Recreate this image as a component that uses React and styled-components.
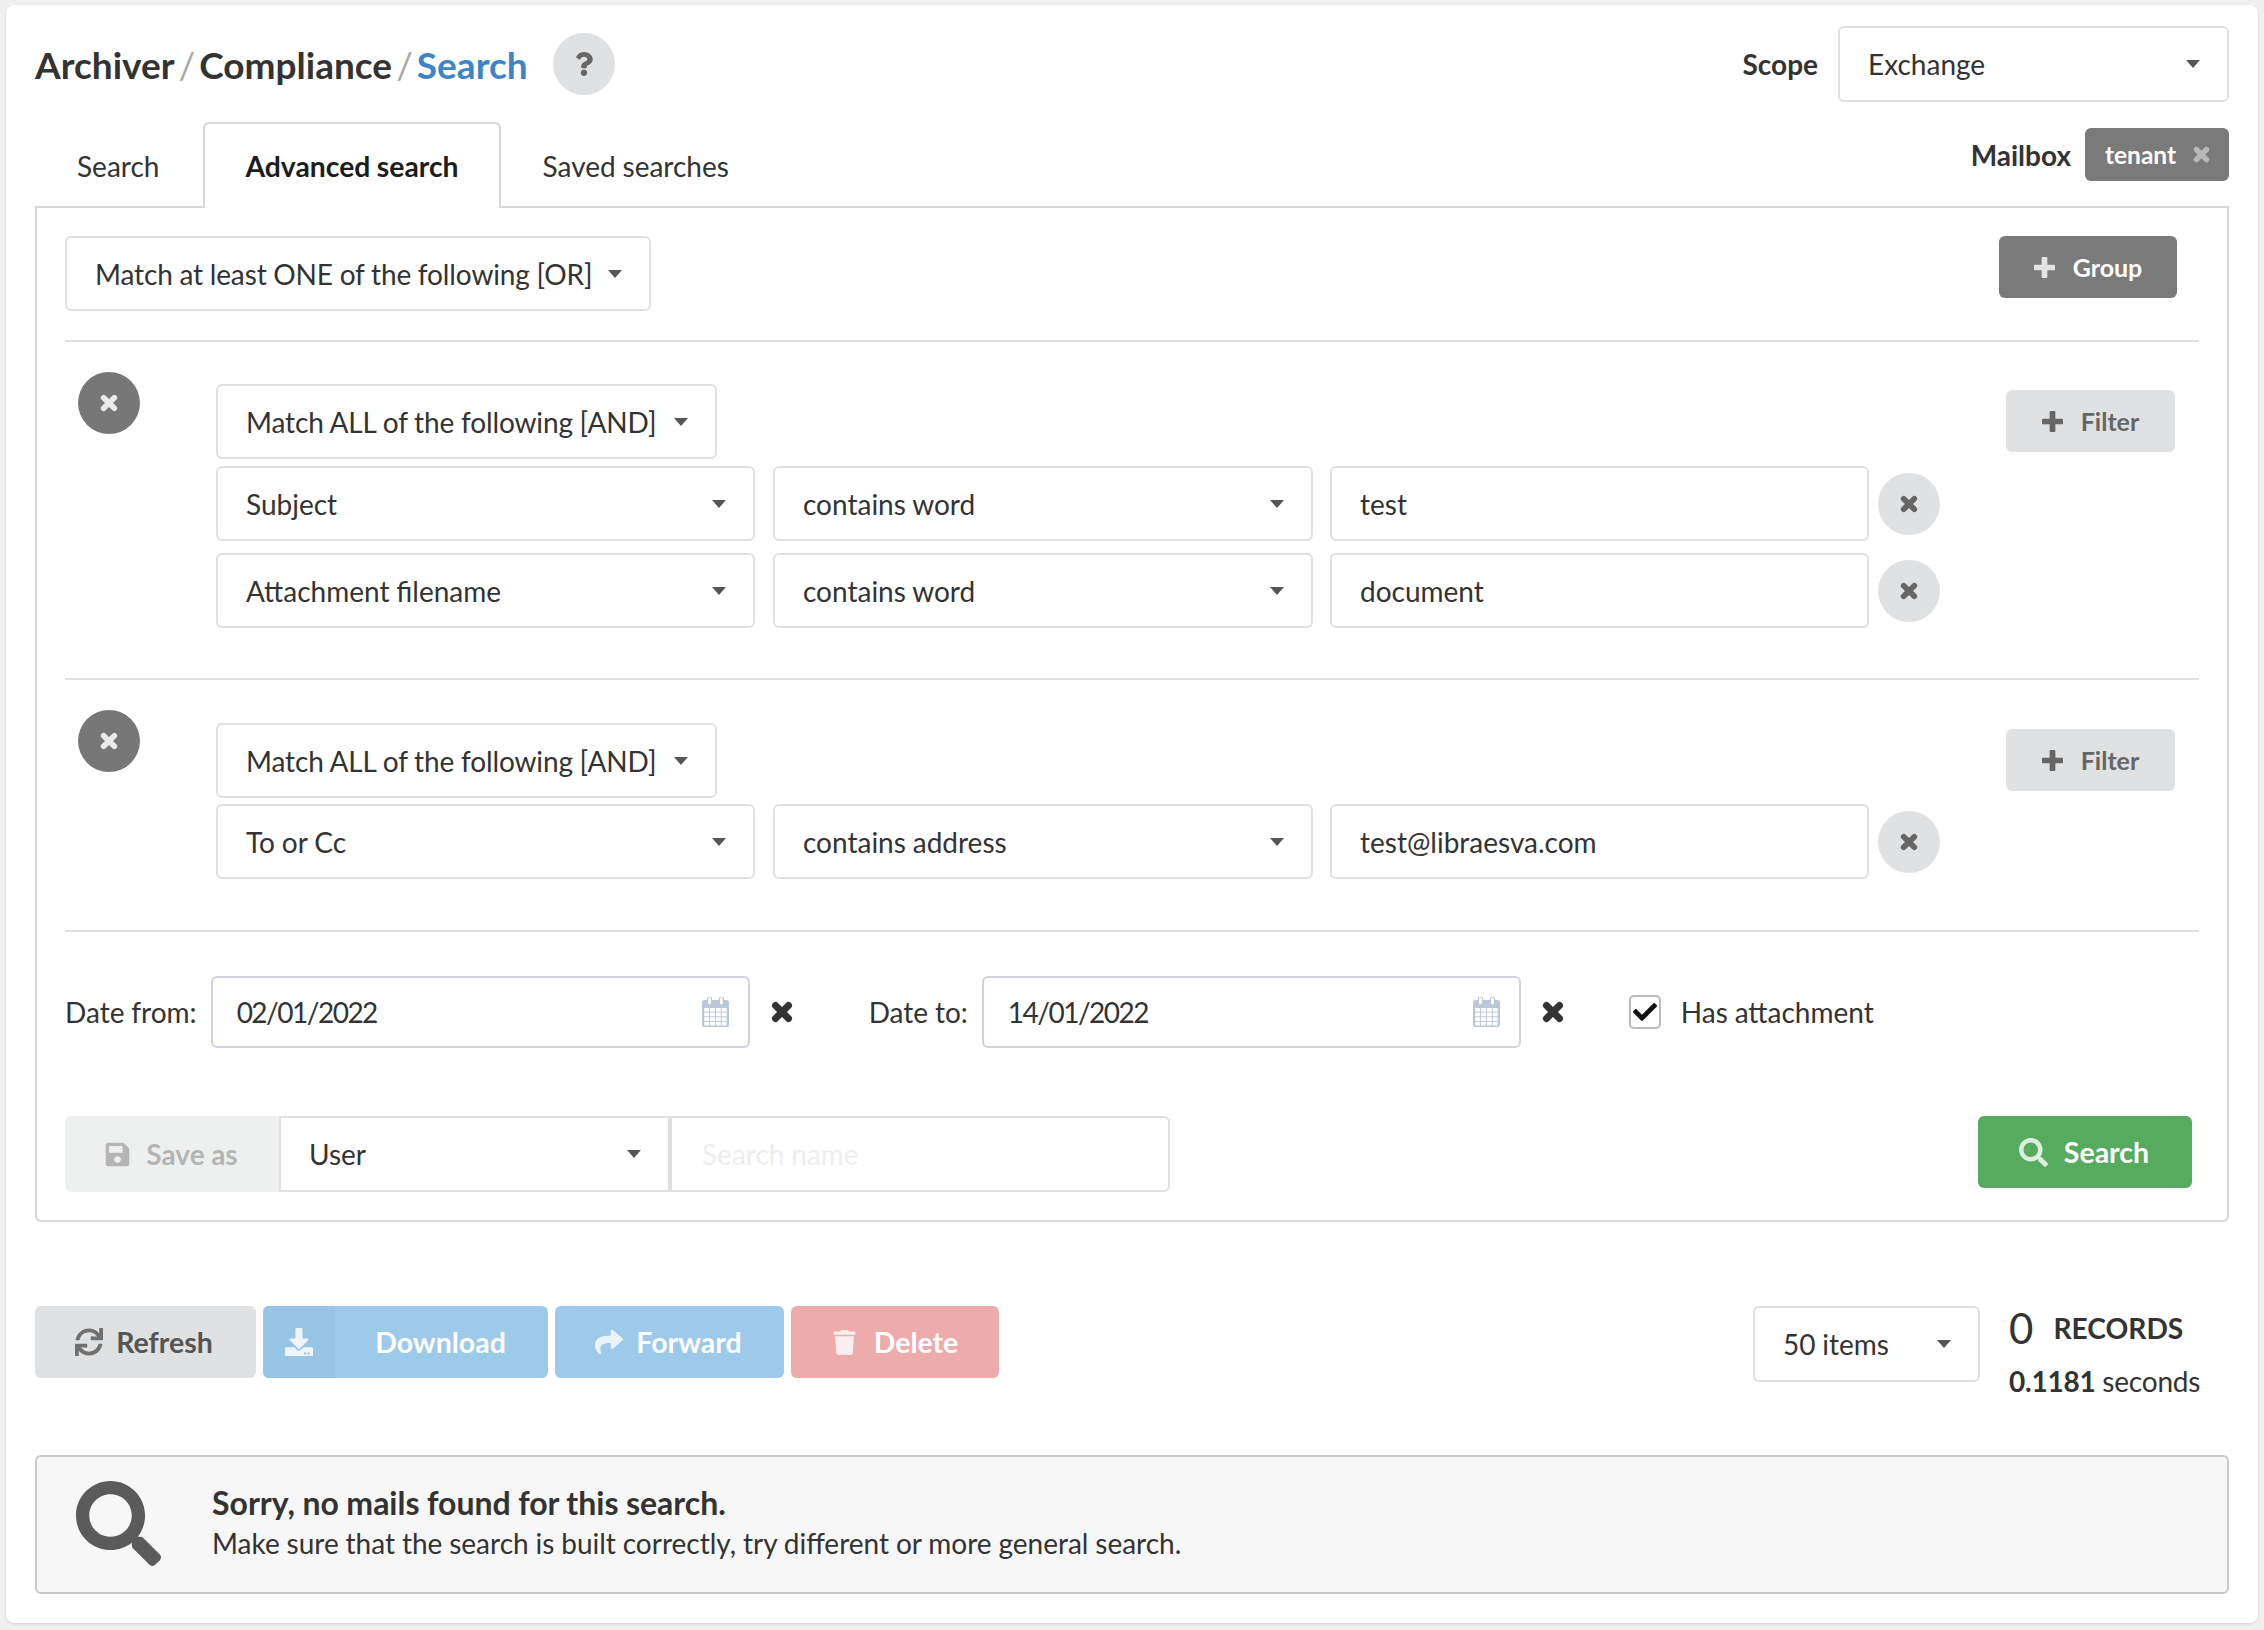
import React from "react";
import styled, { createGlobalStyle } from "styled-components";
import { FaQuestion, FaSave, FaDownload, FaSync, FaShare, FaTrash, FaSearch, FaCheck } from "react-icons/fa";

const GlobalStyle = createGlobalStyle`
  * { box-sizing: border-box; }
  html, body { margin: 0; padding: 0; background: #f0f0f0; }
  body {
    font-family: Lato, "Open Sans", sans-serif;
    font-size: 28px;
    color: #333;
    word-spacing: -0.3px;
  }
`;

const Card = styled.div`
  margin: 5px 6px 7px 6px;
  padding: 21px 29px 29px;
  background: #fff;
  border-radius: 8px;
  box-shadow: 0 1px 3px rgba(0, 0, 0, 0.12);
`;

const Header = styled.div`
  display: flex;
  justify-content: space-between;
  align-items: center;
  height: 76px;
  margin-bottom: 20px;
`;

const Breadcrumb = styled.div`
  display: flex;
  align-items: center;
  font-size: 37px;
  font-weight: 700;
  color: #333;
`;

const Slash = styled.span`
  font-weight: 400;
  color: #aaa;
  margin: 0 4px;
`;

const ActiveCrumb = styled.span`
  color: #3d85c6;
`;

const HelpCircle = styled.div`
  width: 62px;
  height: 62px;
  margin-left: 25px;
  border-radius: 50%;
  background: #e0e1e2;
  color: #666;
  font-size: 24px;
  display: flex;
  align-items: center;
  justify-content: center;
`;

const ScopeWrap = styled.div`
  display: flex;
  align-items: center;
  gap: 20px;
  font-weight: 700;
`;

const Select = styled.div`
  display: flex;
  align-items: center;
  justify-content: space-between;
  flex: none;
  width: ${(p) => p.$width}px;
  height: ${(p) => p.$height || 75}px;
  margin-left: ${(p) => p.$ml || 0}px;
  padding: 0 27px 0 28px;
  background: #fff;
  border: 2px solid #e0e0e0;
  border-radius: ${(p) => p.$radius ?? "6px"};
  font-weight: 400;
  color: #333;
`;

const MatchSelect = styled(Select)`
  letter-spacing: -0.12px;
`;

const Caret = styled.span`
  width: 0;
  height: 0;
  border-left: 7.5px solid transparent;
  border-right: 7.5px solid transparent;
  border-top: 8px solid #555;
`;

const TabBar = styled.div`
  display: flex;
  justify-content: space-between;
  align-items: flex-start;
  height: 84px;
  position: relative;
  z-index: 1;
`;

const Tabs = styled.div`
  display: flex;
  margin-right: auto;
`;

const Tab = styled.div`
  height: 86px;
  padding: 0 40px;
  margin-right: ${(p) => p.$mr || 0}px;
  display: flex;
  align-items: center;
  font-size: ${(p) => (p.$active ? 28.3 : 28)}px;
  font-weight: ${(p) => (p.$active ? 700 : 400)};
  color: ${(p) => (p.$active ? "#1d1d1d" : "#333")};
  background: ${(p) => (p.$active ? "#fff" : "transparent")};
  border: 2px solid ${(p) => (p.$active ? "#d8d8d8" : "transparent")};
  border-bottom: 0;
  border-radius: 6px 6px 0 0;
`;

const MailboxWrap = styled.div`
  display: flex;
  align-items: center;
  gap: 14px;
  margin-top: 6px;
  font-weight: 700;
`;

const Tag = styled.div`
  height: 53px;
  width: 144px;
  padding: 0 19px 0 20px;
  display: flex;
  align-items: center;
  justify-content: space-between;
  background: #7a7a7a;
  border-radius: 6px;
  color: #fff;
  font-size: 24.5px;
  svg { color: #b8b8b8; }
`;

const Panel = styled.div`
  padding: 28px 28px 28px 28px;
  border: 2px solid #d8d8d8;
  border-radius: 0 0 6px 6px;
`;

const TopRow = styled.div`
  display: flex;
  justify-content: space-between;
  align-items: flex-start;
  padding-bottom: 29px;
`;

const Btn = styled.div`
  display: flex;
  align-items: center;
  justify-content: center;
  flex: none;
  gap: ${(p) => p.$gap || 13}px;
  width: ${(p) => p.$width}px;
  height: ${(p) => p.$height}px;
  margin-right: ${(p) => p.$mr || 0}px;
  margin-top: ${(p) => p.$mt || 0}px;
  padding-right: ${(p) => p.$pr || 0}px;
  background: ${(p) => p.$bg};
  color: ${(p) => p.$color || "#fff"};
  border-radius: 6px;
  font-size: ${(p) => p.$size || 28.5}px;
  font-weight: 700;
  svg { opacity: ${(p) => p.$iconOpacity ?? 0.8}; }
`;

const FilterBtn = styled(Btn)`
  margin-left: auto;
`;

const Group = styled.div`
  display: flex;
  align-items: flex-start;
  border-top: 2px solid #e0e0e0;
  padding: ${(p) => p.$padTop}px 0 ${(p) => p.$padBottom}px;
`;

const RemoveGroup = styled.div`
  flex: none;
  width: 62px;
  height: 62px;
  margin: ${(p) => p.$mt}px 76px 0 13px;
  border-radius: 50%;
  background: #777;
  color: #eaeaea;
  display: flex;
  align-items: center;
  justify-content: center;
`;

const Conditions = styled.div`
  display: flex;
  flex-direction: column;
`;

const CondRow = styled.div`
  display: flex;
  align-items: center;
  margin-top: ${(p) => p.$mt}px;
`;

const TextInput = styled.input`
  flex: none;
  width: ${(p) => p.$width}px;
  height: ${(p) => p.$height || 75}px;
  padding: 0 ${(p) => p.$pad || 28}px;
  margin-left: ${(p) => p.$ml || 0}px;
  font: inherit;
  word-spacing: inherit;
  color: #333;
  background: #fff;
  border: 2px solid #e0e0e0;
  border-radius: ${(p) => p.$radius ?? "6px"};
  outline: none;
  &::placeholder { color: #eee; }
`;

const RemoveRow = styled.div`
  flex: none;
  width: 62px;
  height: 62px;
  margin-left: 9px;
  border-radius: 50%;
  background: #e0e1e2;
  color: #666;
  display: flex;
  align-items: center;
  justify-content: center;
`;

const DateRow = styled.div`
  display: flex;
  align-items: center;
  border-top: 2px solid #e0e0e0;
  padding-top: 44px;
`;

const DateBox = styled.div`
  flex: none;
  width: 539px;
  height: 72px;
  margin-left: 14px;
  padding: 0 19px 0 24px;
  display: flex;
  align-items: center;
  justify-content: space-between;
  border: 2px solid #d0d3dd;
  border-radius: 6px;
  color: #333;
`;

const DateValue = styled.span`
  letter-spacing: -1.5px;
`;

const ClearDate = styled.div`
  flex: none;
  line-height: 0;
  margin-left: 21px;
  margin-right: ${(p) => p.$mr}px;
  color: #333;
`;

const CheckBox = styled.div`
  flex: none;
  width: 32px;
  height: 34px;
  border: 2px solid #bbb;
  border-radius: 5px;
  display: flex;
  align-items: center;
  justify-content: center;
  font-size: 24px;
  color: #111;
  margin-right: 20px;
`;

const SaveRow = styled.div`
  display: flex;
  align-items: flex-start;
  justify-content: space-between;
  margin-top: 68px;
`;

const SaveGroup = styled.div`
  display: flex;
`;

const SaveLabel = styled.div`
  width: 214px;
  height: 76px;
  padding-right: 2px;
  background: #eef0f0;
  border-radius: 6px 0 0 6px;
  color: #b5b5b5;
  font-weight: 700;
  display: flex;
  align-items: center;
  justify-content: center;
  gap: 15px;
`;

const Toolbar = styled.div`
  display: flex;
  align-items: flex-start;
  margin: 84px 0 53px;
`;

const ActionGroup = styled.div`
  display: flex;
  gap: 7px;
  margin-right: auto;
`;

const DownloadBtn = styled.div`
  display: flex;
  width: 285px;
  height: 72px;
  border-radius: 6px;
  overflow: hidden;
  background: #9dc9ea;
  color: #fff;
  font-size: 28.5px;
  font-weight: 700;
`;

const DownloadIcon = styled.div`
  width: 72px;
  display: flex;
  align-items: center;
  justify-content: center;
  background: #98c4e6;
  svg { opacity: 0.85; }
`;

const DownloadText = styled.div`
  flex: 1;
  display: flex;
  align-items: center;
  justify-content: center;
  padding-right: 2px;
`;

const Stats = styled.div`
  margin: 0 29px 0 29px;
  width: 191px;
`;

const StatLine = styled.div`
  display: flex;
  align-items: center;
  height: 43px;
  margin-top: ${(p) => p.$mt || 0}px;
  white-space: nowrap;
`;

const Elapsed = styled(StatLine)`
  letter-spacing: -0.2px;
`;

const Zero = styled.span`
  font-size: 42px;
  font-weight: 400;
  margin-right: 20px;
`;

const RecordsLabel = styled.span`
  font-size: 28.2px;
  font-weight: 700;
`;

const Alert = styled.div`
  display: flex;
  align-items: center;
  height: 139px;
  padding-left: 39px;
  background: #f7f7f7;
  border: 2px solid #c8c8c8;
  border-radius: 6px;
  color: #333;
`;

const AlertIcon = styled.div`
  flex: none;
  width: 85px;
  height: 85px;
  margin: -2px 51px 0 0;
  font-size: 85px;
  line-height: 0;
  color: #5b5b5b;
`;

const AlertBody = styled.div`
  padding-bottom: 3px;
`;

const AlertTitle = styled.div`
  font-size: 32px;
  font-weight: 700;
  line-height: 40px;
`;

const AlertText = styled.div`
  line-height: 40px;
`;

const TimesIcon = ({ size = 18 }) => (
  <svg width={size} height={size} viewBox="0 0 22 22">
    <path d="M4.5 4.5l13 13M17.5 4.5l-13 13" fill="none" stroke="currentColor" strokeWidth="7" strokeLinecap="round" />
  </svg>
);

const PlusIcon = ({ size = 21 }) => (
  <svg width={size} height={size} viewBox="0 0 22 22">
    <path d="M8 1a1 1 0 0 1 1-1h4a1 1 0 0 1 1 1v7h7a1 1 0 0 1 1 1v4a1 1 0 0 1-1 1h-7v7a1 1 0 0 1-1 1H9a1 1 0 0 1-1-1v-7H1a1 1 0 0 1-1-1V9a1 1 0 0 1 1-1h7z" fill="currentColor" />
  </svg>
);

const CALENDAR_CELLS = [0, 1, 2, 3].flatMap((r) => [0, 1, 2, 3].map((c) => [c, r]));

const Calendar = () => (
  <svg width="27" height="30" viewBox="0 0 27 30">
    <rect x="0" y="3" width="27" height="27" rx="2.5" fill="#b9c7d9" />
    {CALENDAR_CELLS.map(([c, r]) => (
      <rect key={`${c}-${r}`} x={2.2 + c * 5.85} y={11 + r * 4.6} width="4.9" height="3.7" fill="#fff" />
    ))}
    <rect x="5.5" y="0" width="4" height="8" rx="2" fill="#fff" stroke="#b9c7d9" strokeWidth="1.2" />
    <rect x="17.5" y="0" width="4" height="8" rx="2" fill="#fff" stroke="#b9c7d9" strokeWidth="1.2" />
  </svg>
);

const ConditionRow = ({ field, op, value, mt }) => (
  <CondRow $mt={mt}>
    <Select $width={539}>{field}<Caret /></Select>
    <Select $width={540} $ml={18}>{op}<Caret /></Select>
    <TextInput $width={539} $ml={17} readOnly value={value} />
    <RemoveRow><TimesIcon /></RemoveRow>
  </CondRow>
);

const FilterGroup = ({ padTop, padBottom, circleTop, filterTop, rowGap, rows }) => (
  <Group $padTop={padTop} $padBottom={padBottom}>
    <RemoveGroup $mt={circleTop}><TimesIcon /></RemoveGroup>
    <Conditions>
      <MatchSelect $width={501}>Match ALL of the following [AND]<Caret /></MatchSelect>
      {rows.map((r, i) => (
        <ConditionRow key={r.value} {...r} mt={i === 0 ? rowGap : 12} />
      ))}
    </Conditions>
    <FilterBtn $width={169} $height={62} $mt={filterTop} $mr={24} $gap={18} $bg="#e0e1e2" $color="#666" $size={25} $iconOpacity={1}>
      <PlusIcon />Filter
    </FilterBtn>
  </Group>
);

export default function App() {
  return (
    <>
      <GlobalStyle />
      <Card>
        <Header>
          <Breadcrumb>
            Archiver<Slash>/</Slash>Compliance<Slash>/</Slash><ActiveCrumb>Search</ActiveCrumb>
            <HelpCircle><FaQuestion /></HelpCircle>
          </Breadcrumb>
          <ScopeWrap>
            Scope
            <Select $width={391} $height={76}>Exchange<Caret /></Select>
          </ScopeWrap>
        </Header>

        <TabBar>
          <Tabs>
            <Tab $mr={2}>Search</Tab>
            <Tab $active>Advanced search</Tab>
            <Tab>Saved searches</Tab>
          </Tabs>
          <MailboxWrap>
            Mailbox
            <Tag>tenant<TimesIcon size={17} /></Tag>
          </MailboxWrap>
        </TabBar>

        <Panel>
          <TopRow>
            <MatchSelect $width={586}>Match at least ONE of the following [OR]<Caret /></MatchSelect>
            <Btn $width={178} $height={62} $mr={22} $gap={18} $bg="#7a7a7a" $size={25}><PlusIcon />Group</Btn>
          </TopRow>

          <FilterGroup
            padTop={42}
            padBottom={50}
            circleTop={-12}
            filterTop={6}
            rowGap={7}
            rows={[
              { field: "Subject", op: "contains word", value: "test" },
              { field: "Attachment filename", op: "contains word", value: "document" },
            ]}
          />
          <FilterGroup
            padTop={43}
            padBottom={51}
            circleTop={-13}
            filterTop={6}
            rowGap={6}
            rows={[{ field: "To or Cc", op: "contains address", value: "test@libraesva.com" }]}
          />

          <DateRow>
            Date from:
            <DateBox><DateValue>02/01/2022</DateValue><Calendar /></DateBox>
            <ClearDate $mr={76}><TimesIcon size={22} /></ClearDate>
            Date to:
            <DateBox><DateValue>14/01/2022</DateValue><Calendar /></DateBox>
            <ClearDate $mr={65}><TimesIcon size={22} /></ClearDate>
            <CheckBox><FaCheck /></CheckBox>
            Has attachment
          </DateRow>

          <SaveRow>
            <SaveGroup>
              <SaveLabel><FaSave size={27} />Save as</SaveLabel>
              <Select $width={391} $height={76} $radius="0">User<Caret /></Select>
              <TextInput $width={500} $height={76} $pad={30} $radius="0 6px 6px 0" placeholder="Search name" readOnly />
            </SaveGroup>
            <Btn $width={214} $height={72} $mr={7} $gap={16} $pr={2} $bg="#57ab5e"><FaSearch size={29} />Search</Btn>
          </SaveRow>
        </Panel>

        <Toolbar>
          <ActionGroup>
            <Btn $width={221} $height={72} $pr={3} $bg="#e0e1e2" $color="#555"><FaSync size={28} />Refresh</Btn>
            <DownloadBtn>
              <DownloadIcon><FaDownload size={28} /></DownloadIcon>
              <DownloadText>Download</DownloadText>
            </DownloadBtn>
            <Btn $width={229} $height={72} $pr={2} $bg="#9dc9ea"><FaShare size={28} />Forward</Btn>
            <Btn $width={208} $height={72} $gap={17} $bg="#eeabab"><FaTrash size={25} />Delete</Btn>
          </ActionGroup>
          <Select $width={227} $height={76}>50 items<Caret /></Select>
          <Stats>
            <StatLine><Zero>0</Zero><RecordsLabel>RECORDS</RecordsLabel></StatLine>
            <Elapsed $mt={10}><b>0.1181</b>&nbsp;seconds</Elapsed>
          </Stats>
        </Toolbar>

        <Alert>
          <AlertIcon><FaSearch /></AlertIcon>
          <AlertBody>
            <AlertTitle>Sorry, no mails found for this search.</AlertTitle>
            <AlertText>Make sure that the search is built correctly, try different or more general search.</AlertText>
          </AlertBody>
        </Alert>
      </Card>
    </>
  );
}
